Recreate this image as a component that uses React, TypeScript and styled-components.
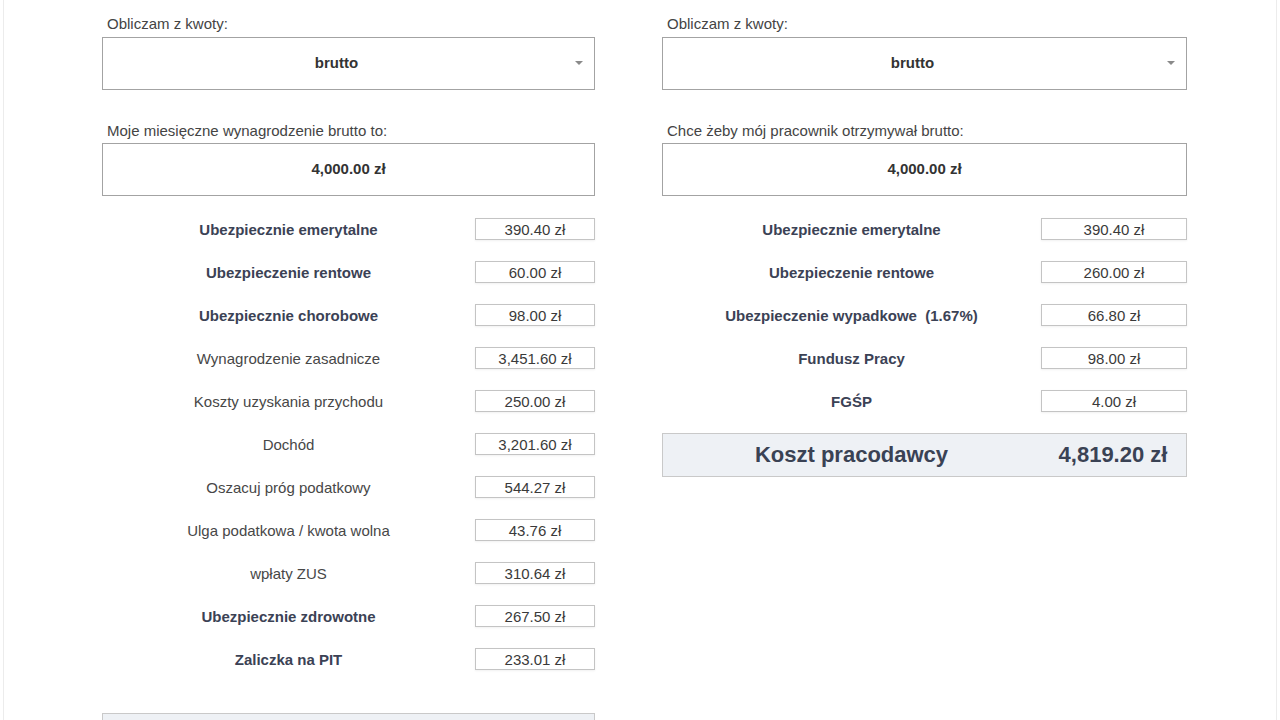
import React from 'react';
import styled, { createGlobalStyle } from 'styled-components';

const GlobalStyle = createGlobalStyle`
  html, body {
    margin: 0;
    padding: 0;
    background: #fff;
  }
  body {
    font-family: "Liberation Sans", Arial, Helvetica, sans-serif;
    color: #333;
  }
`;

type Row = { label: string; value: string; bold?: boolean };

const employeeRows: Row[] = [
  { label: 'Ubezpiecznie emerytalne', value: '390.40 zł', bold: true },
  { label: 'Ubezpieczenie rentowe', value: '60.00 zł', bold: true },
  { label: 'Ubezpiecznie chorobowe', value: '98.00 zł', bold: true },
  { label: 'Wynagrodzenie zasadnicze', value: '3,451.60 zł' },
  { label: 'Koszty uzyskania przychodu', value: '250.00 zł' },
  { label: 'Dochód', value: '3,201.60 zł' },
  { label: 'Oszacuj próg podatkowy', value: '544.27 zł' },
  { label: 'Ulga podatkowa / kwota wolna', value: '43.76 zł' },
  { label: 'wpłaty ZUS', value: '310.64 zł' },
  { label: 'Ubezpiecznie zdrowotne', value: '267.50 zł', bold: true },
  { label: 'Zaliczka na PIT', value: '233.01 zł', bold: true },
];

const employerRows: Row[] = [
  { label: 'Ubezpiecznie emerytalne', value: '390.40 zł', bold: true },
  { label: 'Ubezpieczenie rentowe', value: '260.00 zł', bold: true },
  { label: 'Ubezpieczenie wypadkowe\u00a0 (1.67%)', value: '66.80 zł', bold: true },
  { label: 'Fundusz Pracy', value: '98.00 zł', bold: true },
  { label: 'FGŚP', value: '4.00 zł', bold: true },
];

const Frame = styled.div`
  margin: 0 3px;
  min-height: 100vh;
  border-left: 1px solid #ececec;
  border-right: 1px solid #ececec;
  box-sizing: border-box;
  padding: 15px 0 40px 98px;
`;

const Columns = styled.div`
  display: grid;
  grid-template-columns: 493px 525px;
  column-gap: 67px;
  align-items: start;
`;

const Column = styled.section`
  display: flex;
  flex-direction: column;
`;

const FieldLabel = styled.label<{ $top?: number }>`
  display: block;
  margin-top: ${(p) => p.$top ?? 0}px;
  padding-left: 5px;
  font-size: 15px;
  line-height: 18px;
  color: #444;
`;

const Select = styled.div`
  position: relative;
  margin-top: 4px;
  height: 53px;
  box-sizing: border-box;
  border: 1px solid #a3a3a3;
  display: flex;
  align-items: center;
  justify-content: center;
  padding-right: 24px;
  padding-bottom: 2px;
  font-size: 15px;
  font-weight: 700;
  color: #333;
`;

const Caret = styled.span`
  position: absolute;
  right: 11px;
  top: 23px;
  width: 0;
  height: 0;
  border-left: 4px solid transparent;
  border-right: 4px solid transparent;
  border-top: 4px solid #8a8a8a;
`;

const AmountInput = styled.div`
  margin-top: 3px;
  height: 53px;
  box-sizing: border-box;
  border: 1px solid #a3a3a3;
  display: flex;
  align-items: center;
  justify-content: center;
  padding-bottom: 2px;
  font-size: 15px;
  font-weight: 700;
  color: #333;
`;

const Rows = styled.div`
  margin-top: 22px;
  display: flex;
  flex-direction: column;
  gap: 21px;
`;

const RowLine = styled.div<{ $valueWidth: number }>`
  display: grid;
  grid-template-columns: 1fr ${(p) => p.$valueWidth}px;
  align-items: center;
  height: 22px;
`;

const RowLabel = styled.span<{ $bold?: boolean }>`
  text-align: center;
  font-size: 15px;
  font-weight: ${(p) => (p.$bold ? 700 : 400)};
  color: ${(p) => (p.$bold ? '#3b4255' : '#474747')};
  white-space: pre;
`;

const ValueBox = styled.span`
  height: 22px;
  box-sizing: border-box;
  border: 1px solid #c4c4c4;
  box-shadow: 0 1px 2px rgba(0, 0, 0, 0.06);
  display: flex;
  align-items: center;
  justify-content: center;
  font-size: 15px;
  color: #3a3a3a;
`;

const TotalBox = styled.div<{ $valueWidth: number; $top?: number }>`
  margin-top: ${(p) => p.$top ?? 0}px;
  height: 44px;
  box-sizing: border-box;
  border: 1px solid #c9c9c9;
  background: #eef1f5;
  display: grid;
  grid-template-columns: 1fr ${(p) => p.$valueWidth}px;
  align-items: center;
  font-size: 22px;
  font-weight: 700;
  color: #3a4254;
`;

const TotalLabel = styled.span`
  text-align: center;
`;

const TotalValue = styled.span`
  text-align: center;
`;

const FormColumn = ({
  label,
  amountLabel,
  rows,
  valueWidth,
  total,
  totalGap,
}: {
  label: string;
  amountLabel: string;
  rows: Row[];
  valueWidth: number;
  total: { label: string; value: string };
  totalGap: number;
}) => (
  <Column>
    <FieldLabel>{label}</FieldLabel>
    <Select>
      brutto
      <Caret />
    </Select>
    <FieldLabel $top={32}>{amountLabel}</FieldLabel>
    <AmountInput>4,000.00 zł</AmountInput>
    <Rows>
      {rows.map((r) => (
        <RowLine key={r.label} $valueWidth={valueWidth}>
          <RowLabel $bold={r.bold}>{r.label}</RowLabel>
          <ValueBox>{r.value}</ValueBox>
        </RowLine>
      ))}
      <TotalBox $valueWidth={valueWidth} $top={totalGap}>
        <TotalLabel>{total.label}</TotalLabel>
        <TotalValue>{total.value}</TotalValue>
      </TotalBox>
    </Rows>
  </Column>
);

const App = () => (
  <>
    <GlobalStyle />
    <Frame>
      <Columns>
        <FormColumn
          label="Obliczam z kwoty:"
          amountLabel="Moje miesięczne wynagrodzenie brutto to:"
          rows={employeeRows}
          valueWidth={120}
          total={{ label: 'Wynagrodzenie netto', value: '2,951.09 zł' }}
          totalGap={22}
        />
        <FormColumn
          label="Obliczam z kwoty:"
          amountLabel="Chce żeby mój pracownik otrzymywał brutto:"
          rows={employerRows}
          valueWidth={146}
          total={{ label: 'Koszt pracodawcy', value: '4,819.20 zł' }}
          totalGap={0}
        />
      </Columns>
    </Frame>
  </>
);

export default App;
